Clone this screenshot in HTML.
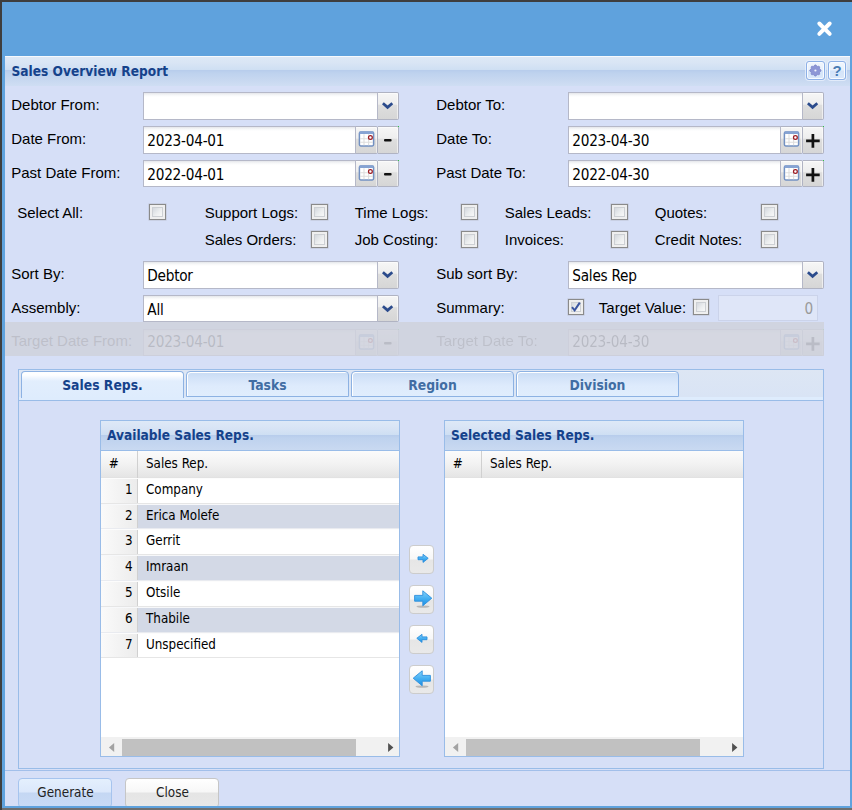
<!DOCTYPE html>
<html><head><meta charset="utf-8"><title>Sales Overview Report</title>
<style>
html,body{margin:0;padding:0}
body{width:852px;height:810px;overflow:hidden;position:relative;background:#3e3e3e;font-family:"Liberation Sans",Arial,sans-serif;font-size:15px;color:#000}
div,span,i{box-sizing:border-box}
.abs,.abs>*{position:absolute}
svg{display:block;position:absolute;left:0;top:0}
#win{left:2px;top:2px;width:850px;height:806px;background:#5fa2dd}
#bottom{left:2px;top:808px;width:850px;height:2px;background:#6e6e6e;overflow:hidden}
#panel{left:5px;top:56px;width:845px;height:750px;background:#d6dff7;overflow:hidden}
#phead{left:0;top:0;width:845px;height:30px;background:linear-gradient(#f6f9fd 0,#f6f9fd 1px,#dde8f6 1px,#d9e5f5 7px,#cedff3 14px,#b8cdec 14.5px,#bed2ee 17px,#c6d7f0 23px,#cfdef3 30px)}
.title{font-family:"DejaVu Sans Condensed","DejaVu Sans",sans-serif;font-weight:bold;color:#15428b;white-space:nowrap;font-size:13.6px;line-height:16px}
.lbl{white-space:nowrap;font-size:15px;line-height:17px;color:#000}
.tah{font-family:"DejaVu Sans Condensed","DejaVu Sans",sans-serif;white-space:nowrap}
.inp{background:#fff linear-gradient(#e4e6ea 0,#f6f7f8 2px,#fff 4px);border:1px solid #b5b8c8;font-family:"DejaVu Sans Condensed","DejaVu Sans",sans-serif;font-size:15.2px;letter-spacing:-.25px;line-height:28px;padding-left:3.3px;white-space:nowrap;color:#000;overflow:hidden}
.trg{border:1px solid #b0b3c2;border-left:0;background:linear-gradient(#f6f6f6 0,#eeeeee 43%,#dedede 47%,#d6d6d6 100%);border-radius:0 2px 2px 0;box-shadow:inset -1px 1px 0 rgba(255,255,255,.55)}
.gd{position:absolute;right:-1px;top:-1px;width:1px;height:1px;background:#2ecc40}
.cb{border:1px solid #8a8a8a;background:#efefef;box-shadow:0 0 0 .5px rgba(140,140,140,.35)}
.cb:before{content:"";position:absolute;left:2px;top:2px;right:2px;bottom:2px;border:1px solid #cdd0d4;background:linear-gradient(135deg,#d4d8de 0,#eceeef 55%,#f8f8f8 100%)}
.tool{border:1px solid #8db0e6;border-radius:3px;background:linear-gradient(#f1f6fd 0,#e9f1fc 48%,#d3e3f9 52%,#dbe8fa 100%);box-shadow:0 0 0 1px rgba(232,240,252,.8), inset 0 0 0 1px #f8fbff}
.q{display:block;position:absolute;left:0;top:0;width:100%;text-align:center;font-family:"Liberation Sans",Arial,sans-serif;font-weight:bold;font-size:15px;line-height:17px;color:#4a7cb4}
#mask{background:rgba(205,205,210,.62)}
.dis{opacity:.3}
.dis2{opacity:.24}
#tabs{border:1px solid #99bce8;background:#d6dff7}
#tabbar{background:linear-gradient(#dde6f4,#d9e4f5);border-bottom:1px solid #99bce8}
#tabstrip{background:#deecfd;border-top:0;border-bottom:1px solid #99bce8}
.tab{border:1px solid #8db2e3;border-radius:4px 4px 0 0;background:linear-gradient(#c8dbf4 0,#d3e3f8 6px,#deebfc 14px,#e0edfd 100%);box-shadow:inset 1px 1px 0 #fff;text-align:center;font-family:"DejaVu Sans Condensed","DejaVu Sans",sans-serif;font-weight:bold;font-size:13.8px;line-height:26px;color:#416da3;white-space:nowrap}
.tab.on{border-bottom:0;box-shadow:none;background:linear-gradient(#fff 0,#fdfeff 3px,#e2eefd 9px,#deecfd 100%);color:#15428b}
.grid{border:1px solid #99bce8;background:#fff;overflow:hidden}
.ghead{left:0;top:0;height:30px;width:100%;background:linear-gradient(#dee9f7 0,#d8e4f5 7px,#cedff3 14px,#b8cdec 14.5px,#bed2ee 17px,#c9d9f1 29px);border-bottom:1px solid #99bce8}
.chead{left:0;top:30px;height:27px;width:100%;background:linear-gradient(#fbfbfb 0,#f2f2f2 50%,#e5e5e5 100%);border-bottom:1px solid #e2e2e2}
.cell{font-family:"DejaVu Sans Condensed","DejaVu Sans",sans-serif;font-size:13.3px;line-height:16px;white-space:nowrap;color:#000}
.row{left:0;width:298px;border-top:1px solid #fcfcfc;border-bottom:1px solid #e6e6e6;background:#fff}
.row.alt{background:#d3d9e6;border-top-color:#f7f8fa;border-bottom-color:#e9ebf0}
.num{left:0;top:0;width:37px;background:linear-gradient(90deg,#fafafa,#ececec);border-right:1px solid #d0d0d0;text-align:right;padding-right:4.5px}
.sb{left:0;height:19px;width:298px;background:#f1f1f1}
.thumb{top:2px;height:17px;background:#c1c1c1}
.mbtn{width:25px;height:29px;border:1px solid #cccccc;border-radius:4px;background:linear-gradient(#ffffff 0,#f7f7f7 49%,#e6e6e6 51%,#e9e9e9 100%)}
.btn{border:1px solid #c6c6c6;border-radius:4px;background:linear-gradient(#ffffff 0,#f7f7f7 13px,#e5e5e5 14px,#e8e8e8 28px);text-align:center;font-family:"DejaVu Sans Condensed","DejaVu Sans",sans-serif;font-size:13.4px;line-height:28px;color:#222;white-space:nowrap;padding-left:1px}
.btn.focus{border-color:#a6c4ee;background:linear-gradient(#e4effd 0,#dbe8fb 13px,#c4d7f3 14px,#c9dbf5 28px)}
</style></head><body class="abs">
<div id="win" class="abs"><svg width="850" height="54" viewBox="0 0 850 54"><path d="M817.3 21.5 L827.7 31.9 M827.7 21.5 L817.3 31.9" stroke="#fff" stroke-width="3.9" stroke-linecap="round" fill="none"/></svg></div>
<div id="bottom"></div>
<svg width="0" height="0"><defs><linearGradient id="ag" x1="0" y1="0" x2="0" y2="1"><stop offset="0" stop-color="#86d3fb"/><stop offset=".5" stop-color="#46b0f2"/><stop offset="1" stop-color="#1c8fe4"/></linearGradient></defs></svg>
<div id="panel" class="abs">
<div id="phead"></div>

<div class="title" style="left:6.5px;top:7.299999999999997px;">Sales Overview Report</div>
<div class="tool" style="left:801px;top:5px;width:19px;height:19px;"><svg width="19" height="19" viewBox="0 0 19 19"><path d="M7.85 2.93 L8.95 2.93 L9.74 4.10 L10.57 4.44 L11.95 4.17 L12.73 4.95 L12.46 6.33 L12.80 7.16 L13.97 7.95 L13.97 9.05 L12.80 9.84 L12.46 10.67 L12.73 12.05 L11.95 12.83 L10.57 12.56 L9.74 12.90 L8.95 14.07 L7.85 14.07 L7.06 12.90 L6.23 12.56 L4.85 12.83 L4.07 12.05 L4.34 10.67 L4.00 9.84 L2.83 9.05 L2.83 7.95 L4.00 7.16 L4.34 6.33 L4.07 4.95 L4.85 4.17 L6.23 4.44 L7.06 4.10Z" fill="#8d96d6" stroke="#7f88ca" stroke-width=".8" stroke-linejoin="round"/><circle cx="8.4" cy="8.5" r="1.1" fill="#f4f6fd"/></svg></div>
<div class="tool" style="left:823px;top:5px;width:18px;height:19px;"><span class="q">?</span></div>
<div class="lbl" style="left:6.25px;top:39.5px;">Debtor From:</div>
<div class="inp" style="left:138px;top:36px;width:235px;height:28px;line-height:28px"></div>
<div class="trg" style="left:373px;top:36px;width:21px;height:28px;"><svg width="21" height="27" viewBox="0 0 21 27"><path d="M4.9 10.3 L9.6 14.3 L14.3 10.3" fill="none" stroke="#2b4b8c" stroke-width="2.8" stroke-linejoin="miter"/></svg></div>
<div class="lbl" style="left:6.25px;top:73.5px;">Date From:</div>
<div class="inp" style="left:138px;top:70px;width:213px;height:28px;line-height:28px">2023-04-01</div>
<div class="trg" style="left:351px;top:70px;width:22px;height:28px;"><svg width="22" height="27" viewBox="0 0 22 27"><rect x="3.4" y="4.9" width="14.2" height="14" rx="1.3" fill="#fff" stroke="#7391c2" stroke-width="1.5"/><rect x="3.4" y="4.5" width="14.2" height="2.4" rx="1" fill="#86a3d3"/><path d="M8 7.3v11M12.6 7.3v11M4 11.7h13M4 15.3h13" stroke="#dedede" stroke-width="1.1" fill="none"/><circle cx="14.4" cy="10.5" r="1.9" fill="#fff" stroke="#9c1a22" stroke-width="1.25"/></svg></div>
<div class="trg" style="left:373px;top:70px;width:21px;height:28px;"><svg width="21" height="27" viewBox="0 0 21 27"><rect x="6" y="12" width="7.6" height="2.5" rx="1" fill="#111"/></svg><i class="gd"></i></div>
<div class="lbl" style="left:6.25px;top:107.5px;">Past Date From:</div>
<div class="inp" style="left:138px;top:104px;width:213px;height:27px;line-height:29px">2022-04-01</div>
<div class="trg" style="left:351px;top:104px;width:22px;height:27px;"><svg width="22" height="27" viewBox="0 0 22 27"><rect x="3.4" y="4.9" width="14.2" height="14" rx="1.3" fill="#fff" stroke="#7391c2" stroke-width="1.5"/><rect x="3.4" y="4.5" width="14.2" height="2.4" rx="1" fill="#86a3d3"/><path d="M8 7.3v11M12.6 7.3v11M4 11.7h13M4 15.3h13" stroke="#dedede" stroke-width="1.1" fill="none"/><circle cx="14.4" cy="10.5" r="1.9" fill="#fff" stroke="#9c1a22" stroke-width="1.25"/></svg></div>
<div class="trg" style="left:373px;top:104px;width:21px;height:27px;"><svg width="21" height="27" viewBox="0 0 21 27"><rect x="6" y="12" width="7.6" height="2.5" rx="1" fill="#111"/></svg><i class="gd"></i></div>
<div class="lbl" style="left:431.25px;top:39.5px;">Debtor To:</div>
<div class="inp" style="left:563px;top:36px;width:235px;height:28px;line-height:28px"></div>
<div class="trg" style="left:798px;top:36px;width:21px;height:28px;"><svg width="21" height="27" viewBox="0 0 21 27"><path d="M4.9 10.3 L9.6 14.3 L14.3 10.3" fill="none" stroke="#2b4b8c" stroke-width="2.8" stroke-linejoin="miter"/></svg></div>
<div class="lbl" style="left:431.25px;top:73.5px;">Date To:</div>
<div class="inp" style="left:563px;top:70px;width:213px;height:28px;line-height:28px">2023-04-30</div>
<div class="trg" style="left:776px;top:70px;width:22px;height:28px;"><svg width="22" height="27" viewBox="0 0 22 27"><rect x="3.4" y="4.9" width="14.2" height="14" rx="1.3" fill="#fff" stroke="#7391c2" stroke-width="1.5"/><rect x="3.4" y="4.5" width="14.2" height="2.4" rx="1" fill="#86a3d3"/><path d="M8 7.3v11M12.6 7.3v11M4 11.7h13M4 15.3h13" stroke="#dedede" stroke-width="1.1" fill="none"/><circle cx="14.4" cy="10.5" r="1.9" fill="#fff" stroke="#9c1a22" stroke-width="1.25"/></svg></div>
<div class="trg" style="left:798px;top:70px;width:21px;height:28px;"><svg width="21" height="27" viewBox="0 0 21 27"><path d="M9.9 7v13.8M3.1 13.9h13.6" stroke="#111" stroke-width="2.7" fill="none"/></svg><i class="gd"></i></div>
<div class="lbl" style="left:431.25px;top:107.5px;">Past Date To:</div>
<div class="inp" style="left:563px;top:104px;width:213px;height:27px;line-height:29px">2022-04-30</div>
<div class="trg" style="left:776px;top:104px;width:22px;height:27px;"><svg width="22" height="27" viewBox="0 0 22 27"><rect x="3.4" y="4.9" width="14.2" height="14" rx="1.3" fill="#fff" stroke="#7391c2" stroke-width="1.5"/><rect x="3.4" y="4.5" width="14.2" height="2.4" rx="1" fill="#86a3d3"/><path d="M8 7.3v11M12.6 7.3v11M4 11.7h13M4 15.3h13" stroke="#dedede" stroke-width="1.1" fill="none"/><circle cx="14.4" cy="10.5" r="1.9" fill="#fff" stroke="#9c1a22" stroke-width="1.25"/></svg></div>
<div class="trg" style="left:798px;top:104px;width:21px;height:27px;"><svg width="21" height="27" viewBox="0 0 21 27"><path d="M9.9 7v13.8M3.1 13.9h13.6" stroke="#111" stroke-width="2.7" fill="none"/></svg><i class="gd"></i></div>
<div class="lbl" style="left:12.25px;top:147.5px;">Select All:</div>
<div class="cb" style="left:144px;top:148px;width:17px;height:16px;"></div>
<div class="lbl" style="left:199.75px;top:147.5px;">Support Logs:</div>
<div class="cb" style="left:306px;top:148px;width:17px;height:16px;"></div>
<div class="lbl" style="left:349.75px;top:147.5px;">Time Logs:</div>
<div class="cb" style="left:456px;top:148px;width:17px;height:16px;"></div>
<div class="lbl" style="left:499.75px;top:147.5px;">Sales Leads:</div>
<div class="cb" style="left:606px;top:148px;width:17px;height:16px;"></div>
<div class="lbl" style="left:649.75px;top:147.5px;">Quotes:</div>
<div class="cb" style="left:756px;top:148px;width:17px;height:16px;"></div>
<div class="lbl" style="left:199.75px;top:174.5px;">Sales Orders:</div>
<div class="cb" style="left:306px;top:175px;width:17px;height:17px;"></div>
<div class="lbl" style="left:349.75px;top:174.5px;">Job Costing:</div>
<div class="cb" style="left:456px;top:175px;width:17px;height:17px;"></div>
<div class="lbl" style="left:499.75px;top:174.5px;">Invoices:</div>
<div class="cb" style="left:606px;top:175px;width:17px;height:17px;"></div>
<div class="lbl" style="left:649.75px;top:174.5px;">Credit Notes:</div>
<div class="cb" style="left:756px;top:175px;width:17px;height:17px;"></div>
<div class="lbl" style="left:6.25px;top:208.5px;">Sort By:</div>
<div class="inp" style="left:138px;top:205px;width:235px;height:28px;line-height:28px">Debtor</div>
<div class="trg" style="left:373px;top:205px;width:21px;height:28px;"><svg width="21" height="27" viewBox="0 0 21 27"><path d="M4.9 10.3 L9.6 14.3 L14.3 10.3" fill="none" stroke="#2b4b8c" stroke-width="2.8" stroke-linejoin="miter"/></svg></div>
<div class="lbl" style="left:431.25px;top:208.5px;">Sub sort By:</div>
<div class="inp" style="left:563px;top:205px;width:235px;height:28px;line-height:28px">Sales Rep</div>
<div class="trg" style="left:798px;top:205px;width:21px;height:28px;"><svg width="21" height="27" viewBox="0 0 21 27"><path d="M4.9 10.3 L9.6 14.3 L14.3 10.3" fill="none" stroke="#2b4b8c" stroke-width="2.8" stroke-linejoin="miter"/></svg></div>
<div class="lbl" style="left:6.25px;top:242.5px;">Assembly:</div>
<div class="inp" style="left:138px;top:239px;width:235px;height:27px;line-height:29px">All</div>
<div class="trg" style="left:373px;top:239px;width:21px;height:27px;"><svg width="21" height="27" viewBox="0 0 21 27"><path d="M4.9 10.3 L9.6 14.3 L14.3 10.3" fill="none" stroke="#2b4b8c" stroke-width="2.8" stroke-linejoin="miter"/></svg></div>
<div class="lbl" style="left:431.25px;top:242.5px;">Summary:</div>
<div class="cb" style="left:563px;top:243px;width:16px;height:16px;"><svg width="14" height="14" viewBox="0 0 14 14"><path d="M3 7.2 L5.6 10.4 L10.8 2.6" fill="none" stroke="#3a55a0" stroke-width="2"/></svg></div>
<div class="lbl" style="left:593.85px;top:242.5px;">Target Value:</div>
<div class="cb" style="left:688px;top:243px;width:16px;height:16px;"></div>
<div class="inp" style="left:713px;top:239px;width:100px;height:26px;background:#dfe6f8;border-color:#cbd3ea;color:#9a9a9a;text-align:right;padding-right:4px;line-height:27px">0</div>
<div class="lbl dis2" style="left:6.25px;top:276.0px;">Target Date From:</div>
<div class="abs dis" style="left:0;top:0">
<div class="inp" style="left:138px;top:273px;width:213px;height:27px;line-height:25px">2023-04-01</div>
<div class="trg" style="left:351px;top:273px;width:22px;height:27px;"><svg width="22" height="27" viewBox="0 0 22 27"><rect x="3.4" y="4.9" width="14.2" height="14" rx="1.3" fill="#fff" stroke="#7391c2" stroke-width="1.5"/><rect x="3.4" y="4.5" width="14.2" height="2.4" rx="1" fill="#86a3d3"/><path d="M8 7.3v11M12.6 7.3v11M4 11.7h13M4 15.3h13" stroke="#dedede" stroke-width="1.1" fill="none"/><circle cx="14.4" cy="10.5" r="1.9" fill="#fff" stroke="#9c1a22" stroke-width="1.25"/></svg></div>
<div class="trg" style="left:373px;top:273px;width:21px;height:27px;"><svg width="21" height="27" viewBox="0 0 21 27"><rect x="6" y="12" width="7.6" height="2.5" rx="1" fill="#111"/></svg><i class="gd"></i></div>
<div class="inp" style="left:563px;top:273px;width:213px;height:27px;line-height:25px">2023-04-30</div>
<div class="trg" style="left:776px;top:273px;width:22px;height:27px;"><svg width="22" height="27" viewBox="0 0 22 27"><rect x="3.4" y="4.9" width="14.2" height="14" rx="1.3" fill="#fff" stroke="#7391c2" stroke-width="1.5"/><rect x="3.4" y="4.5" width="14.2" height="2.4" rx="1" fill="#86a3d3"/><path d="M8 7.3v11M12.6 7.3v11M4 11.7h13M4 15.3h13" stroke="#dedede" stroke-width="1.1" fill="none"/><circle cx="14.4" cy="10.5" r="1.9" fill="#fff" stroke="#9c1a22" stroke-width="1.25"/></svg></div>
<div class="trg" style="left:798px;top:273px;width:21px;height:27px;"><svg width="21" height="27" viewBox="0 0 21 27"><path d="M9.9 7v13.8M3.1 13.9h13.6" stroke="#111" stroke-width="2.7" fill="none"/></svg><i class="gd"></i></div>
</div>
<div class="lbl dis2" style="left:431.25px;top:276.0px;">Target Date To:</div>
<div id="mask" style="left:0px;top:266px;width:819px;height:34px;"></div>
<div id="tabs" class="abs" style="left:13px;top:313px;width:806px;height:400px">
<div id="tabbar" style="left:0;top:0;width:804px;height:28px"></div>
<div id="tabstrip" style="left:0;top:27px;width:804px;height:4px"></div>
<div class="tab on" style="left:2px;top:1px;width:163px;height:27px">Sales Reps.</div>
<div class="tab" style="left:167px;top:1px;width:163px;height:26px">Tasks</div>
<div class="tab" style="left:332px;top:1px;width:163px;height:26px">Region</div>
<div class="tab" style="left:497px;top:1px;width:163px;height:26px">Division</div>
<div class="grid abs" style="left:81px;top:50px;width:300px;height:337px">
<div class="ghead"></div><div class="title" style="left:6px;top:6px">Available Sales Reps.</div>
<div class="chead"></div><div style="left:36px;top:30px;width:1px;height:27px;background:#d0d0d0"></div>
<div class="cell" style="left:7.7px;top:35px">#</div><div class="cell" style="left:45px;top:35px">Sales Rep.</div>
<div class="row abs" style="top:57px;height:26px"><div class="num cell" style="height:24px;line-height:22px">1</div><div class="cell" style="left:45px;top:3px">Company</div></div>
<div class="row alt abs" style="top:83px;height:25px"><div class="num cell" style="height:23px;line-height:21px">2</div><div class="cell" style="left:45px;top:3px">Erica Molefe</div></div>
<div class="row abs" style="top:108px;height:26px"><div class="num cell" style="height:24px;line-height:22px">3</div><div class="cell" style="left:45px;top:3px">Gerrit</div></div>
<div class="row alt abs" style="top:134px;height:26px"><div class="num cell" style="height:24px;line-height:22px">4</div><div class="cell" style="left:45px;top:3px">Imraan</div></div>
<div class="row abs" style="top:160px;height:26px"><div class="num cell" style="height:24px;line-height:22px">5</div><div class="cell" style="left:45px;top:3px">Otsile</div></div>
<div class="row alt abs" style="top:186px;height:26px"><div class="num cell" style="height:24px;line-height:22px">6</div><div class="cell" style="left:45px;top:3px">Thabile</div></div>
<div class="row abs" style="top:212px;height:25px"><div class="num cell" style="height:23px;line-height:21px">7</div><div class="cell" style="left:45px;top:3px">Unspecified</div></div>
<div class="sb abs" style="top:316px"><div class="thumb" style="left:21px;width:234px"></div><svg width="298" height="19" viewBox="0 0 298 19"><path d="M13.2 5.9v9.2l-5.3-4.6z" fill="#a3a3a3"/><path d="M287.1 5.9v9.2l5.3-4.6z" fill="#505050"/></svg></div>
</div>
<div class="grid abs" style="left:425px;top:50px;width:300px;height:337px">
<div class="ghead"></div><div class="title" style="left:6px;top:6px">Selected Sales Reps.</div>
<div class="chead"></div><div style="left:36px;top:30px;width:1px;height:27px;background:#d0d0d0"></div>
<div class="cell" style="left:7.7px;top:35px">#</div><div class="cell" style="left:45px;top:35px">Sales Rep.</div>
<div class="sb abs" style="top:316px"><div class="thumb" style="left:21px;width:234px"></div><svg width="298" height="19" viewBox="0 0 298 19"><path d="M13.2 5.9v9.2l-5.3-4.6z" fill="#a3a3a3"/><path d="M287.1 5.9v9.2l5.3-4.6z" fill="#505050"/></svg></div>
</div>
<div class="mbtn" style="left:390px;top:175px"><svg width="25" height="29" viewBox="0 0 25 29"><g><path d="M8 10.9h5v-2.6l5.2 4-5.2 4.1v-2.7h-5z" fill="url(#ag)" stroke="#2d8fdc" stroke-width=".9" stroke-linejoin="round"/></g></svg></div>
<div class="mbtn" style="left:390px;top:215px"><svg width="25" height="29" viewBox="0 0 25 29"><g><ellipse cx="13" cy="20.6" rx="6.5" ry="1.1" fill="rgba(60,60,60,.28)"/><path d="M4.6 9.4h8.2v-4.6l9 7.4-9 7.6v-4.6h-8.2z" fill="url(#ag)" stroke="#2d8fdc" stroke-width=".9" stroke-linejoin="round"/></g></svg></div>
<div class="mbtn" style="left:390px;top:255px"><svg width="25" height="29" viewBox="0 0 25 29"><g transform="translate(25,0) scale(-1,1)"><path d="M8 10.9h5v-2.6l5.2 4-5.2 4.1v-2.7h-5z" fill="url(#ag)" stroke="#2d8fdc" stroke-width=".9" stroke-linejoin="round"/></g></svg></div>
<div class="mbtn" style="left:390px;top:295px"><svg width="25" height="29" viewBox="0 0 25 29"><g transform="translate(25,0) scale(-1,1)"><ellipse cx="13" cy="20.6" rx="6.5" ry="1.1" fill="rgba(60,60,60,.28)"/><path d="M4.6 9.4h8.2v-4.6l9 7.4-9 7.6v-4.6h-8.2z" fill="url(#ag)" stroke="#2d8fdc" stroke-width=".9" stroke-linejoin="round"/></g></svg></div>
</div>
<div class="" style="left:0px;top:714px;width:845px;height:1px;background:#a2bfea"></div>
<div class="btn focus" style="left:13px;top:722px;width:94px;height:30px;">Generate</div>
<div class="btn" style="left:120px;top:722px;width:94px;height:30px;">Close</div>
</div></body></html>
